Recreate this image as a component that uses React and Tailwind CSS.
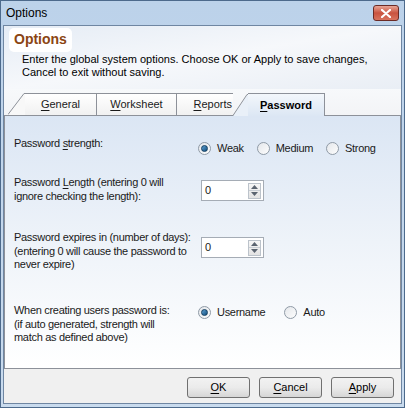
import React from 'react'

function U({ children }) {
  return <span className="underline underline-offset-[2px]">{children}</span>
}

function Radio({ checked, label }) {
  return (
    <div className="flex items-center gap-[6px]">
      <div className="w-[13px] h-[13px] rounded-full border border-[#8f9aa6] bg-gradient-to-br from-[#e4e7eb] to-[#fdfdfd] flex items-center justify-center">
        {checked && <div className="w-[7px] h-[7px] rounded-full bg-gradient-to-br from-[#5fa3d4] to-[#0d4e7e] border border-[#123d5f]" />}
      </div>
      <span className="leading-[14px]">{label}</span>
    </div>
  )
}

function Spin() {
  return (
    <div className="w-[63px] h-[21px] border border-[#a5acb5] bg-white flex items-center justify-between pl-[3px] pr-[2px]">
      <span>0</span>
      <div className="flex flex-col w-[13px] h-[16px] border border-[#bcc3cb] bg-gradient-to-b from-[#f6f6f6] to-[#e3e3e3]">
        <div className="flex-1 flex items-center justify-center border-b border-[#c9ced4]">
          <svg width="7" height="4" viewBox="0 0 7 4"><path d="M0 4 L3.5 0 L7 4 Z" fill="#5b6470" /></svg>
        </div>
        <div className="flex-1 flex items-center justify-center">
          <svg width="7" height="4" viewBox="0 0 7 4"><path d="M0 0 L3.5 4 L7 0 Z" fill="#5b6470" /></svg>
        </div>
      </div>
    </div>
  )
}

function Btn({ u, rest }) {
  return (
    <div className="w-[63px] h-[21px] rounded-[3px] border border-[#707070] bg-gradient-to-b from-[#f2f2f2] via-[#ebebeb] to-[#d6d6d6] flex items-center justify-center text-black">
      <span><U>{u}</U>{rest}</span>
    </div>
  )
}

function Slant({ w, fill }) {
  return (
    <svg width={w} height="22" viewBox={`0 0 ${w} 22`} className="block shrink-0">
      <path d={`M0 22 L${w} 0 L${w} 22 Z`} fill={fill} />
      <path d={`M0 21.5 L${w - 1} 0.5 L${w} 0.5`} stroke="#8d9199" fill="none" />
    </svg>
  )
}

export default function App() {
  return (
    <div
      className="w-[405px] h-[408px] overflow-hidden flex flex-col bg-gradient-to-b from-[#bcd2ea] to-[#c9dbee] border border-[#4d6a8c] text-[11px] text-[#1a1a1a]"
      style={{ fontFamily: '"Liberation Sans", Arial, sans-serif' }}
    >
      <div className="h-[24px] flex items-center justify-between pl-[5px] pr-[5px] shrink-0">
        <span className="text-[12px] text-black">Options</span>
        <div className="w-[26px] h-[16px] rounded-[3px] border border-[#6b2b26] bg-gradient-to-b from-[#e7a597] via-[#c9523f] to-[#d8735e] flex items-center justify-center">
          <svg width="10" height="9" viewBox="0 0 10 9">
            <path d="M1 1 L9 8 M9 1 L1 8" stroke="white" strokeWidth="2.2" strokeLinecap="round" />
          </svg>
        </div>
      </div>
      <div className="flex-1 mx-[2px] mb-[3px] border border-[#6f86a2] flex flex-col bg-[#f0f0f0]">
        <div className="h-[63px] shrink-0 bg-gradient-to-br from-[#e5ecf5] via-[#f6f8fb] to-[#e9eef5] px-[5px] pt-[2px]">
          <div className="inline-block bg-white rounded-[5px] px-[5px] pt-[1px] pb-[2px] text-[14px] font-bold text-[#8b4513]">Options</div>
          <div className="pl-[13px] pt-[1px] leading-[13px] text-black">
            Enter the global system options. Choose OK or Apply to save changes,<br />Cancel to exit without saving.
          </div>
        </div>
        <div className="h-[26px] shrink-0 bg-gradient-to-b from-[#f7f9fb] to-[#f3f4f6] flex items-end pl-[4px]">
          <div className="flex items-end">
            <Slant w={17} fill="#f8f8f8" />
            <div className="w-[72px] h-[22px] border-t border-r border-[#8d9199] bg-gradient-to-b from-white to-[#f1f1f1] flex items-center justify-center"><span><U>G</U>eneral</span></div>
            <div className="w-[80px] h-[22px] border-t border-r border-[#8d9199] bg-gradient-to-b from-white to-[#f1f1f1] flex items-center justify-center"><span><U>W</U>orksheet</span></div>
            <div className="w-[56px] h-[22px] border-t border-[#8d9199] bg-gradient-to-b from-white to-[#f1f1f1] flex items-center justify-end pr-[1px]"><span><U>R</U>eports</span></div>
            <div className="flex items-end relative top-[1px]">
              <Slant w={15} fill="#e9f0f8" />
              <div className="w-[77px] h-[23px] border-t border-r border-[#8d9199] bg-gradient-to-b from-[#f3f7fb] to-[#dce7f4] flex items-center justify-center font-bold text-black"><span><U>P</U>assword</span></div>
            </div>
          </div>
        </div>
        <div className="h-[254px] shrink-0 border border-[#8d9199] bg-gradient-to-b from-[#dbe6f4] via-[#eef3f9] to-white pl-[9px] pr-[10px] tracking-[-0.3px] whitespace-nowrap">
          <div className="flex items-start h-[20px] mt-[20px]">
            <div className="w-[184px] leading-[14px]">Password <U>s</U>trength:</div>
            <div className="flex gap-[13px] mt-[5px]">
              <Radio checked label="Weak" />
              <Radio label="Medium" />
              <Radio label="Strong" />
            </div>
          </div>
          <div className="flex items-start h-[28px] mt-[19px]">
            <div className="w-[187px] leading-[14px]">Password <U>L</U>ength (entering 0 will<br />ignore checking the length):</div>
            <div className="mt-[5px]"><Spin /></div>
          </div>
          <div className="flex items-start h-[41px] mt-[28px]">
            <div className="w-[187px] leading-[13.5px]">Password expires in (number of days):<br />(entering 0 will cause the password to<br />never expire)</div>
            <div className="mt-[6px]"><Spin /></div>
          </div>
          <div className="flex items-start h-[41px] mt-[32px]">
            <div className="w-[184px] leading-[13.5px]">When creating users password is:<br />(if auto generated, strength will<br />match as defined above)</div>
            <div className="flex gap-[19px] mt-[1px]">
              <Radio checked label="Username" />
              <Radio label="Auto" />
            </div>
          </div>
        </div>
        <div className="flex-1 flex items-center justify-end gap-[9px] pr-[7px] pt-[2px]">
          <Btn u="O" rest="K" />
          <Btn u="C" rest="ancel" />
          <Btn u="A" rest="pply" />
        </div>
      </div>
    </div>
  )
}
